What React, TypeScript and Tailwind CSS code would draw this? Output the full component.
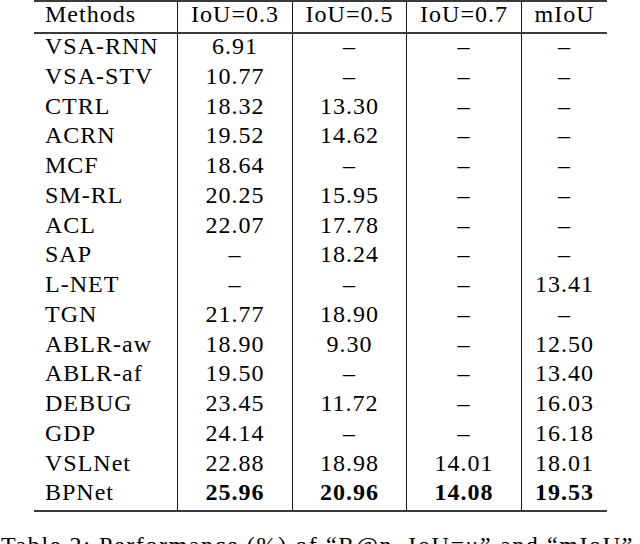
const header = ["Methods", "IoU=0.3", "IoU=0.5", "IoU=0.7", "mIoU"];

const rows: string[][] = [
  ["VSA-RNN", "6.91", "–", "–", "–"],
  ["VSA-STV", "10.77", "–", "–", "–"],
  ["CTRL", "18.32", "13.30", "–", "–"],
  ["ACRN", "19.52", "14.62", "–", "–"],
  ["MCF", "18.64", "–", "–", "–"],
  ["SM-RL", "20.25", "15.95", "–", "–"],
  ["ACL", "22.07", "17.78", "–", "–"],
  ["SAP", "–", "18.24", "–", "–"],
  ["L-NET", "–", "–", "–", "13.41"],
  ["TGN", "21.77", "18.90", "–", "–"],
  ["ABLR-aw", "18.90", "9.30", "–", "12.50"],
  ["ABLR-af", "19.50", "–", "–", "13.40"],
  ["DEBUG", "23.45", "11.72", "–", "16.03"],
  ["GDP", "24.14", "–", "–", "16.18"],
  ["VSLNet", "22.88", "18.98", "14.01", "18.01"],
  ["BPNet", "25.96", "20.96", "14.08", "19.53"],
];

const grid = "grid grid-cols-[143px_115px_114px_115px_86px]";

function Row({ cells, bold, tall }: { cells: string[]; bold?: boolean; tall?: boolean }) {
  return (
    <div className={grid}>
      {cells.map((c, i) => (
        <div
          key={i}
          className={
            (tall ? "h-[30px] " : "h-[29.75px] ") +
            "leading-6 pb-[6px] whitespace-nowrap " +
            (i === 0 ? "pl-[11px] text-left" : "text-center border-l border-[#1a1a1a]") +
            (bold && i > 0 ? " font-bold" : "")
          }
        >
          {c}
        </div>
      ))}
    </div>
  );
}

export default function App() {
  return (
    <div className="w-[640px] h-[544px] overflow-hidden bg-white text-black text-[24px] tracking-[1px] font-[Liberation_Serif,Times_New_Roman,serif]">
      <div className="ml-[34px] w-[573px] border-t-2 border-b-2 border-[#3a3a3a]">
        <div className="border-b-2 border-[#3a3a3a]">
          <Row cells={header} tall />
        </div>
        {rows.map((r, i) => (
          <Row key={r[0]} cells={r} bold={i === rows.length - 1} />
        ))}
      </div>
      <p className="mt-[21px] leading-6 whitespace-nowrap tracking-[1.6px] pl-[1px]">
        Table 2: Performance (%) of “R@n, IoU=μ” and “mIoU”
      </p>
    </div>
  );
}
